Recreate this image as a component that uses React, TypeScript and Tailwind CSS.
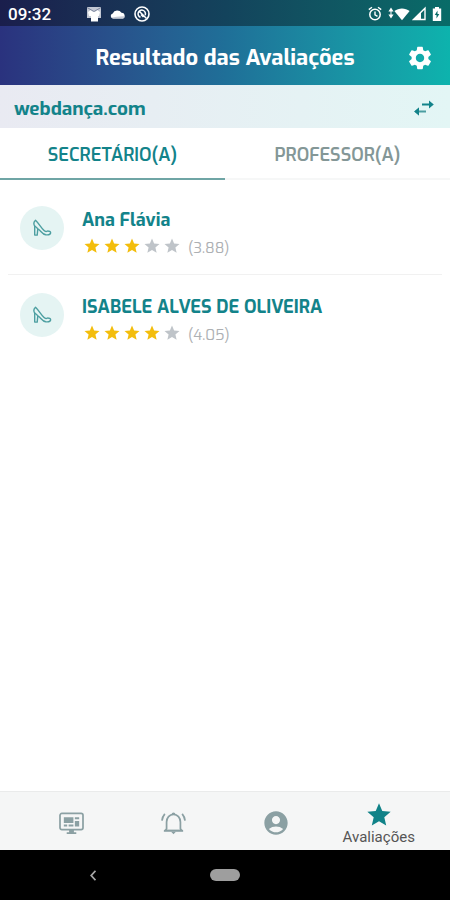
import React, { useState } from 'react';
import { MdAccountCircle, MdSettings, MdStar } from 'react-icons/md';

type Review = { id: number; name: string; rating: number };

const secretaries: Review[] = [
  { id: 1, name: 'Ana Flávia', rating: 3.88 },
  { id: 2, name: 'ISABELE ALVES DE OLIVEIRA', rating: 4.05 },
];

const tabs = [
  { id: 'secretario', label: 'SECRETÁRIO(A)' },
  { id: 'professor', label: 'PROFESSOR(A)' },
];

const App: React.FC = () => {
  const [tab, setTab] = useState('secretario');
  const reviews = tab === 'secretario' ? secretaries : [];

  return (
    <div className="min-h-screen flex flex-col bg-white font-['Exo','Exo_2','Roboto',sans-serif]">
      <StatusBar />

      <header className="h-[59px] pt-1 grid grid-cols-[60px_1fr_60px] items-center bg-linear-to-r from-[#2a327e] via-[#1f6f98] to-[#0db3ad] text-white">
        <h1 className="col-start-2 text-center text-[22px] leading-7 font-bold whitespace-nowrap">Resultado das Avaliações</h1>
        <button type="button" aria-label="Configurações" className="justify-self-center">
          <MdSettings size={28} />
        </button>
      </header>

      <div className="h-[43px] pl-3.5 pr-4 flex items-center justify-between bg-linear-to-r from-[#e9eaf2] to-[#e3f6f5] text-[#13838a]">
        <span className="pt-1.5 text-[19px] font-bold">webdança.com</span>
        <button type="button" aria-label="Trocar escola" className="pt-0.5">
          <SwapIcon />
        </button>
      </div>

      <div role="tablist" className="grid grid-cols-2 h-[52px]">
        {tabs.map((t) => (
          <button
            key={t.id}
            type="button"
            role="tab"
            aria-selected={tab === t.id}
            onClick={() => setTab(t.id)}
            className={`border-b-2 pt-1 text-lg font-semibold ${tab === t.id ? 'border-[#6fa5a5] text-[#13838a]' : 'border-[#f6f7f7] text-[#849797]'}`}
          >
            {t.label}
          </button>
        ))}
      </div>

      <main className="flex-1 px-2 pt-2">
        <ul className="divide-y divide-[#f1f1f1]">
          {reviews.map((r) => (
            <ReviewItem key={r.id} review={r} />
          ))}
        </ul>
      </main>

      <BottomNav />
      <SystemNav />
    </div>
  );
};

const ReviewItem = ({ review }: { review: Review }) => (
  <li className="flex gap-4 px-3 py-4">
    <div className="mt-0.5 size-11 shrink-0 rounded-full bg-[#e5f4f3] flex items-center justify-center">
      <ShoeIcon />
    </div>
    <div className="pl-0.5 pt-1">
      <h2 className="text-lg leading-6 font-bold text-[#13838a]">{review.name}</h2>
      <div className="mt-0.5 flex items-center">
        {[1, 2, 3, 4, 5].map((n) => (
          <span key={n} className={`w-5 flex justify-center ${n <= review.rating ? 'text-[#f3bd0c]' : 'text-[#bfc4c9]'}`}>
            <MdStar size={18} />
          </span>
        ))}
        <span className="pl-1.5 pt-1 text-[15px] leading-5 text-[#adb0b3]">({review.rating.toFixed(2)})</span>
      </div>
    </div>
  </li>
);

const StatusBar = () => (
  <div className="h-[26px] px-2 pt-0.5 flex items-center justify-between bg-linear-to-r from-[#1a1e4c] via-[#13435c] to-[#086c68] text-white">
    <div className="flex items-center">
      <span className="w-[78px] text-[17px] leading-6 font-medium font-['Roboto',sans-serif]">09:32</span>
      <div className="flex items-center gap-2">
        <svg width="16" height="16" viewBox="0 0 16 16">
          <path d="M1 1h14v11H1z" fill="#c3c8d4" />
          <path d="M5 4l1.500 1.500h3L11 4l3 2-1 4h-1v5.500H5V10H3L2 6z" fill="#fff" />
          <path d="M1 1.500l7 4 7-4" stroke="#7f88a0" strokeWidth="1" fill="none" />
        </svg>
        <svg width="16" height="16" viewBox="0 0 16 16">
          <path d="M3 12.500a2.600 2.600 0 0 1-.3-5.100 5 5 0 0 1 8.800-.6A3 3 0 0 1 13 12.500z" fill="#fff" />
          <path d="M1.500 11.500c3-.2 8-1.500 13-1.200v1.200a2 2 0 0 1-1.500 1H3a3 3 0 0 1-1.500-1z" fill="#c6cbd6" />
        </svg>
        <svg width="16" height="16" viewBox="0 0 16 16" fill="none" stroke="#fff">
          <circle cx="8" cy="8" r="7" strokeWidth="1.600" />
          <path d="M6.500 11.300a3.700 3.700 0 1 1 4.700-2.100M5.500 5.500l7 7M7 8.500l2.500 2.500" strokeWidth="1.500" />
        </svg>
      </div>
    </div>
    <div className="flex items-center">
      <svg width="14" height="16" viewBox="0 0 14 16" fill="none" stroke="#fff">
        <circle cx="7" cy="8.500" r="5.200" strokeWidth="1.500" />
        <path d="M7 5.500v3.300l2.500 1.500M.8 3.600L4 1.200M13.200 3.600L10 1.200" strokeWidth="1.400" />
      </svg>
      <svg className="ml-1.5" width="6" height="16" viewBox="0 0 6 16" fill="#fff">
        <path d="M3 1.500L5.600 5.500H.4zM3 12.500L.4 8.500h5.200zM2.500 5h1v4h-1z" />
      </svg>
      <svg width="16" height="16" viewBox="0 0 18 16" fill="#fff">
        <path d="M9 15L.4 4.600C5.500.8 12.500.8 17.600 4.600z" />
      </svg>
      <svg className="ml-0.5" width="14" height="16" viewBox="0 0 14 16">
        <path d="M1.500 13.500L13 2.200v11.300z" stroke="#fff" strokeWidth="1.400" fill="none" />
        <path d="M1 14l8-8v8z" fill="#fff" />
      </svg>
      <svg className="ml-1.5" width="10" height="16" viewBox="0 0 10 16">
        <path d="M3 1h4v1.500h2.200V15H.8V2.500H3z" fill="#fff" />
        <path d="M5.500 4.500L2.800 9h1.700v3.500L7.300 8H5.500z" fill="#086c68" />
      </svg>
    </div>
  </div>
);

const BottomNav = () => (
  <nav className="h-[59px] px-5 pt-1 grid grid-cols-4 items-center bg-[#f5f6f6] border-t border-[#eaebeb] text-[#8ba0a3]">
    <a href="#painel" aria-label="Painel" className="flex justify-center">
      <MonitorIcon />
    </a>
    <a href="#notificacoes" aria-label="Notificações" className="flex justify-center">
      <BellIcon />
    </a>
    <a href="#perfil" aria-label="Perfil" className="flex justify-center">
      <MdAccountCircle size={28} />
    </a>
    <a href="#avaliacoes" className="flex flex-col items-center">
      <MdStar size={28} className="text-[#108288]" />
      <span className="text-[15px] leading-4 text-[#555] font-['Roboto',sans-serif]">Avaliações</span>
    </a>
  </nav>
);

const SystemNav = () => (
  <div className="h-[50px] grid grid-cols-5 items-center justify-items-center bg-black text-[#a6a6a6]">
    <button type="button" aria-label="Voltar" className="col-start-2 justify-self-start">
      <svg width="6" height="11" viewBox="0 0 6 11" fill="none" stroke="currentColor" strokeWidth="1.800">
        <path d="M5.500.8L1.200 5.500l4.300 4.700" />
      </svg>
    </button>
    <button type="button" aria-label="Início" className="w-[30px] h-3 rounded-full bg-[#9e9e9e]" />
  </div>
);

const SwapIcon = () => (
  <svg width="20" height="16" viewBox="0 0 20 16">
    <path d="M8 3.600h7V.6l4.800 4-4.800 4v-3H8z" fill="#13838a" />
    <path d="M12 12.400H5v3L.2 11.400l4.800-4v3h7z" fill="#4b9ea1" />
    <path d="M5 15.400L.2 11.400l4.800-4z" fill="#13838a" />
  </svg>
);

const ShoeIcon = () => (
  <svg width="20" height="18" viewBox="0 0 20 18" fill="none" stroke="#4d9fa1" strokeWidth="1.400" strokeLinejoin="round">
    <path d="M3.500 1.200C1.800 2.600 1.500 5 2.700 7.200v8.900h2.500l.6-6.300c2.800 1.300 4.200 5.400 8 6 2.500.3 4.500-.2 4.800-1.800.2-1.500-1.600-2-3-2-1 .6-2.600.6-3.800-.7C9 8.500 6.500 4 3.500 1.200z" />
    <path d="M2.700 7.200c1 .6 2 1.400 3.100 2.600" />
  </svg>
);

const MonitorIcon = () => (
  <svg width="25" height="23" viewBox="0 0 26 24">
    <rect x="1" y="1.500" width="24" height="17" rx="2" fill="none" stroke="currentColor" strokeWidth="1.800" />
    <path d="M10.500 18h5v3H18v2H8v-2h2.500zM5 5.500h10V11.500H5zM16.500 5.500H21v2h-4.500zM16.500 9.500H21v5.500h-4.500zM5 13h3.500v2H5zM10 13h5v2h-5z" fill="currentColor" />
  </svg>
);

const BellIcon = () => (
  <svg width="25" height="24" viewBox="0 0 26 24" fill="none" stroke="currentColor" strokeWidth="1.800">
    <path d="M5.800 18v-7c0-4.500 3-8 7.200-8s7.200 3.500 7.200 8v7l1.300 2h-17z" />
    <path d="M3 20h20" />
    <path d="M10.500 21h5L13 23.800zM11 3a2 2 0 0 1 4 0z" fill="currentColor" stroke="none" />
    <path d="M4 2.500C2.300 4.500 1.300 6.700 1 9.500M22 2.500c1.700 2 2.700 4.200 3 7" />
  </svg>
);

export default App;
